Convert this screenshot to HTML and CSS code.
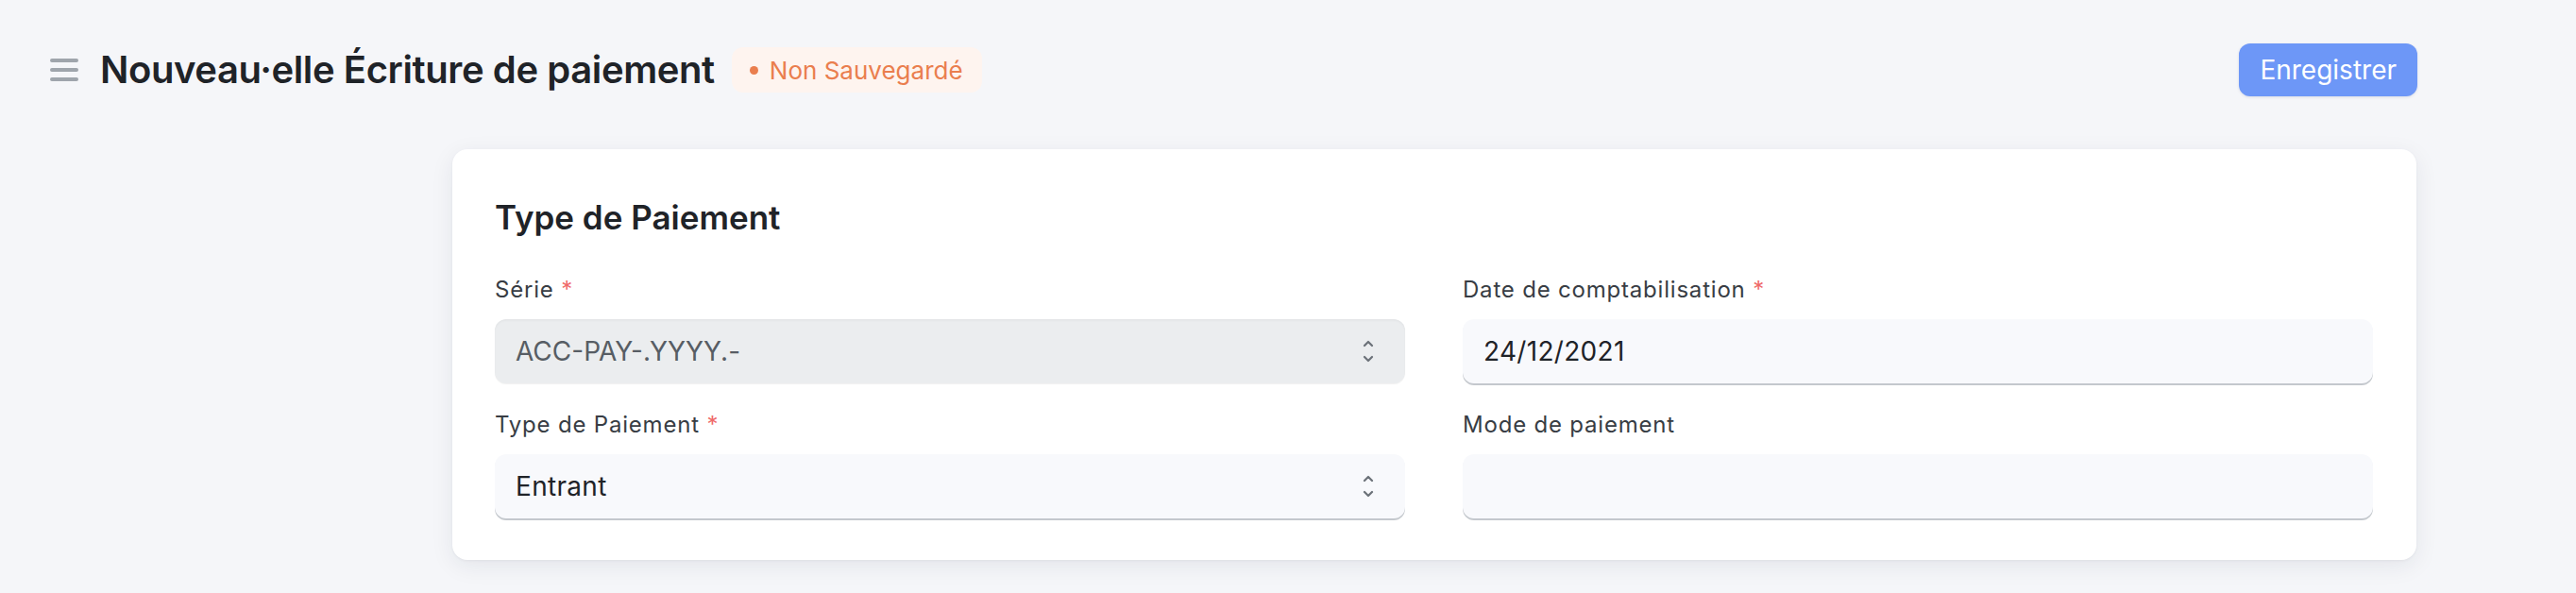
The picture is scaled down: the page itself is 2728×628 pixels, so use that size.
FILE: index.html
```html
<!DOCTYPE html>
<html lang="fr">
<head>
<meta charset="utf-8">
<title>Écriture de paiement</title>
<link rel="stylesheet" href="styles.css">
</head>
<body>
<div class="page">
  <header class="topbar">
    <div class="title-group">
      <svg class="menu-icon" width="30" height="24" viewBox="0 0 30 24" aria-hidden="true">
        <path d="M2 2h26M2 12h26M2 22h26" stroke="#9fa5ac" stroke-width="4" stroke-linecap="round" fill="none"/>
      </svg>
      <h1 class="title">Nouveau·elle Écriture de paiement</h1>
      <span class="badge"><span class="dot"></span>Non Sauvegardé</span>
    </div>
    <button class="btn-primary">Enregistrer</button>
  </header>

  <main class="content">
    <section class="card">
      <h2 class="card-title">Type de Paiement</h2>
      <div class="form-grid">
        <div class="field">
          <label class="label">Série <span class="req">*</span></label>
          <div class="input input-disabled">
            <span class="value muted">ACC-PAY-.YYYY.-</span>
            <svg class="chev" width="12" height="24" viewBox="0 0 12 24" aria-hidden="true">
              <path d="M2 6l4-4 4 4M2 18l4 4 4-4" stroke="#6b7178" stroke-width="2.2" fill="none" stroke-linecap="round" stroke-linejoin="round"/>
            </svg>
          </div>
        </div>
        <div class="field">
          <label class="label">Date de comptabilisation <span class="req">*</span></label>
          <div class="input">
            <span class="value">24/12/2021</span>
          </div>
        </div>
        <div class="field">
          <label class="label">Type de Paiement <span class="req">*</span></label>
          <div class="input">
            <span class="value">Entrant</span>
            <svg class="chev" width="12" height="24" viewBox="0 0 12 24" aria-hidden="true">
              <path d="M2 6l4-4 4 4M2 18l4 4 4-4" stroke="#6b7178" stroke-width="2.2" fill="none" stroke-linecap="round" stroke-linejoin="round"/>
            </svg>
          </div>
        </div>
        <div class="field">
          <label class="label">Mode de paiement</label>
          <div class="input"></div>
        </div>
      </div>
    </section>
  </main>
</div>
</body>
</html>
```

FILE: styles.css
```css
* { box-sizing: border-box; }

html, body {
  margin: 0;
  padding: 0;
}

body {
  background: #f5f6f9;
  font-family: Inter, "Noto Sans", "Liberation Sans", sans-serif;
  color: #1f2328;
}

.page {
  width: 2728px;
  min-height: 628px;
}

.topbar {
  display: flex;
  align-items: center;
  justify-content: space-between;
  padding: 46px 168px 0 53px;
  height: 102px;
}

.title-group {
  display: flex;
  align-items: center;
}

.menu-icon {
  display: block;
  margin-right: 23px;
}

.title {
  margin: 0;
  font-size: 40px;
  font-weight: 600;
  line-height: 56px;
  letter-spacing: -0.4px;
  color: #1f2328;
}

.badge {
  display: inline-flex;
  align-items: center;
  height: 48px;
  margin-left: 18px;
  padding: 0 20px 0 19px;
  border-radius: 12px;
  background: #fef4ef;
  color: #ea7e4e;
  font-size: 26px;
  font-weight: 400;
}

.dot {
  width: 9px;
  height: 9px;
  border-radius: 50%;
  background: #ea7e4e;
  margin-right: 12px;
}

.btn-primary {
  height: 56px;
  padding: 0 22px;
  border: none;
  border-radius: 12px;
  background: #6d97f7;
  color: #ffffff;
  font-family: inherit;
  font-size: 28px;
  font-weight: 400;
  box-shadow: 0 1px 3px rgba(30, 50, 100, 0.12);
}

.content {
  padding: 56px 0 0 479px;
}

.card {
  width: 2080px;
  background: #ffffff;
  border-radius: 16px;
  padding: 50px 46px 44px 45px;
  box-shadow: 0 6px 24px rgba(30, 40, 60, 0.08), 0 1px 3px rgba(30, 40, 60, 0.05);
}

.card-title {
  margin: 0 0 38px 0;
  font-size: 35px;
  line-height: 45px;
  font-weight: 600;
  color: #1f2328;
}

.form-grid {
  display: grid;
  grid-template-columns: 1fr 1fr;
  column-gap: 61px;
  row-gap: 28px;
}

.field {
  display: flex;
  flex-direction: column;
  gap: 15px;
}

.label {
  font-size: 24px;
  line-height: 32px;
  letter-spacing: 0.8px;
  color: #383d44;
}

.req {
  color: #ef6a6a;
}

.input {
  height: 68px;
  display: flex;
  align-items: center;
  justify-content: space-between;
  padding: 0 33px 0 22px;
  border-radius: 12px;
  background: #f8f9fc;
  box-shadow: 0 2px 0 0 #c4c8cd;
  font-size: 28px;
  letter-spacing: 0.3px;
  color: #1f2328;
}

.input-disabled {
  background: #ebedef;
  box-shadow: inset 0 2px 2px rgba(0, 0, 0, 0.03), 0 1px 1px rgba(0, 0, 0, 0.06);
}

.value.muted {
  color: #575d64;
  letter-spacing: 0;
}

.chev {
  display: block;
}
```
